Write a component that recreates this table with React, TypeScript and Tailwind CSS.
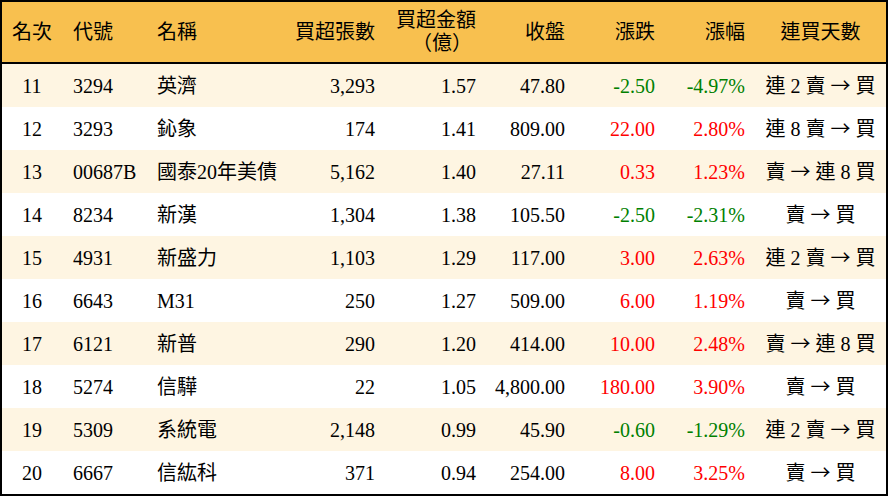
const rows = [
  { rank: 11, code: '3294', name: '英濟', vol: '3,293', amt: '1.57', close: '47.80', chg: '-2.50', pct: '-4.97%', streak: '連 2 賣 → 買' },
  { rank: 12, code: '3293', name: '鈊象', vol: '174', amt: '1.41', close: '809.00', chg: '22.00', pct: '2.80%', streak: '連 8 賣 → 買' },
  { rank: 13, code: '00687B', name: '國泰20年美債', vol: '5,162', amt: '1.40', close: '27.11', chg: '0.33', pct: '1.23%', streak: '賣 → 連 8 買' },
  { rank: 14, code: '8234', name: '新漢', vol: '1,304', amt: '1.38', close: '105.50', chg: '-2.50', pct: '-2.31%', streak: '賣 → 買' },
  { rank: 15, code: '4931', name: '新盛力', vol: '1,103', amt: '1.29', close: '117.00', chg: '3.00', pct: '2.63%', streak: '連 2 賣 → 買' },
  { rank: 16, code: '6643', name: 'M31', vol: '250', amt: '1.27', close: '509.00', chg: '6.00', pct: '1.19%', streak: '賣 → 買' },
  { rank: 17, code: '6121', name: '新普', vol: '290', amt: '1.20', close: '414.00', chg: '10.00', pct: '2.48%', streak: '賣 → 連 8 買' },
  { rank: 18, code: '5274', name: '信驊', vol: '22', amt: '1.05', close: '4,800.00', chg: '180.00', pct: '3.90%', streak: '賣 → 買' },
  { rank: 19, code: '5309', name: '系統電', vol: '2,148', amt: '0.99', close: '45.90', chg: '-0.60', pct: '-1.29%', streak: '連 2 賣 → 買' },
  { rank: 20, code: '6667', name: '信紘科', vol: '371', amt: '0.94', close: '254.00', chg: '8.00', pct: '3.25%', streak: '賣 → 買' },
]

const cols = 'grid grid-cols-[60px_84px_140px_99px_101px_89px_90px_90px_131px]'

// arrow drawn from the CJK font so it gets a full-width glyph
function Streak({ text }: { text: string }) {
  const [from, to] = text.split(' → ')
  return (
    <>
      {from} <span className="font-['Noto_Sans_CJK_TC',sans-serif]">→</span> {to}
    </>
  )
}

export default function App() {
  return (
    <div className="w-[888px] h-[496px] bg-white font-['Liberation_Serif','Noto_Sans_CJK_TC',serif] text-[20px] text-black">
      <div className="h-full border-2 border-black">
        <div className={`${cols} h-[62px] items-center bg-[#f8c04f] border-b-2 border-black leading-[23px]`}>
          <div className="text-center">名次</div>
          <div className="pl-[11px]">代號</div>
          <div className="pl-[11px]">名稱</div>
          <div className="pr-[10px] text-right">買超張數</div>
          <div className="pr-[10px] text-right">
            <div>買超金額</div>
            <div className="mr-[4px]">（億）</div>
          </div>
          <div className="pr-[10px] text-right">收盤</div>
          <div className="pr-[10px] text-right">漲跌</div>
          <div className="pr-[10px] text-right">漲幅</div>
          <div className="text-center">連買天數</div>
        </div>

        {rows.map((r, i) => {
          const color = r.chg.startsWith('-') ? 'text-[#008000]' : 'text-[#ff0000]'
          return (
            <div
              key={r.rank}
              className={`${cols} h-[43px] items-center ${i % 2 === 0 ? 'bg-[#fef5e2]' : 'bg-white'}`}
            >
              <div className="text-center">{r.rank}</div>
              <div className="pl-[11px]">{r.code}</div>
              <div className="pl-[11px] whitespace-nowrap">{r.name}</div>
              <div className="pr-[10px] text-right">{r.vol}</div>
              <div className="pr-[10px] text-right">{r.amt}</div>
              <div className="pr-[10px] text-right">{r.close}</div>
              <div className={`pr-[10px] text-right ${color}`}>{r.chg}</div>
              <div className={`pr-[10px] text-right ${color}`}>{r.pct}</div>
              <div className="text-center whitespace-pre">
                <Streak text={r.streak} />
              </div>
            </div>
          )
        })}
      </div>
    </div>
  )
}
